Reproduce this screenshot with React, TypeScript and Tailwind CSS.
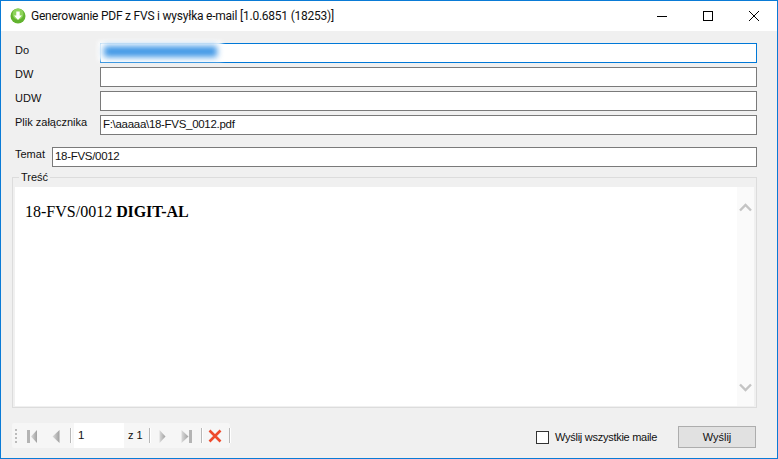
import type { ReactNode } from "react";

const font = { fontFamily: '"Liberation Sans", Arial, sans-serif' };

function Field({ label, value, focused, children }: { label: string; value?: string; focused?: boolean; children?: ReactNode }) {
  return (
    <div className="flex h-5 items-start">
      <span className="w-[88px] shrink-0 pl-[3px] text-[11px] leading-[14px] text-[#111]">{label}</span>
      <div className={`relative flex h-5 flex-1 items-center border bg-white px-[2px] text-[11.5px] tracking-[-0.3px] text-[#111] ${focused ? "border-[#0078d7]" : "border-[#7a7a7a]"}`}>
        {value}
        {children}
      </div>
    </div>
  );
}

// przyciski nawigace toolbaru, 16x16 ikona na stredu 23px tlacitka
function NavIcon({ kind }: { kind: "first" | "prev" | "next" | "last" }) {
  return (
    <div className="flex h-full w-[23px] shrink-0 items-center justify-center">
      <svg width="16" height="16" viewBox="0 0 16 16">
        <defs>
          <linearGradient id="tg" x1="0" y1="0" x2="1" y2="0">
            <stop offset="0" stopColor="#dadada" />
            <stop offset="1" stopColor="#a0a0a0" />
          </linearGradient>
        </defs>
        {kind === "first" && <><rect x="3" y="2" width="3" height="13" fill="#b4b4b4" /><polygon points="13,2 13,15 7,8.5" fill="url(#tg)" /></>}
        {kind === "prev" && <polygon points="11.5,2 11.5,15 4.5,8.5" fill="url(#tg)" />}
        {kind === "next" && <polygon points="4.5,2 4.5,15 10.5,8.5" fill="url(#tg)" />}
        {kind === "last" && <><polygon points="2.5,2 2.5,15 9.5,8.5" fill="url(#tg)" /><rect x="10" y="2" width="3" height="13" fill="#b4b4b4" /></>}
      </svg>
    </div>
  );
}

const Sep = ({ className }: { className: string }) => <div className={`h-[15px] w-[2px] shrink-0 border-l border-[#b8b8b8] bg-white ${className}`} />;

export default function App() {
  return (
    <div className="flex h-[459px] w-[778px] flex-col overflow-hidden border border-[#0a7bd6] bg-[#f0f0f0]" style={font}>
      <div className="flex h-[30px] shrink-0 items-center bg-white">
        <svg width="16" height="16" viewBox="0 0 16 16" className="ml-[9px] mr-[5px] shrink-0">
          <circle cx="8" cy="8" r="7.5" fill="#62b32f" />
          <circle cx="8" cy="6" r="5.5" fill="#8ed35a" />
          <path d="M6.3 3.5h3.4v4h2.3L8 12 4 7.5h2.3z" fill="#fff" />
        </svg>
        <span className="text-[12px] tracking-[-0.23px] text-[#111]" style={{ fontFamily: 'Roboto, sans-serif' }}>
          Generowanie PDF z FVS i wysyłka e-mail [1.0.6851 (18253)]
        </span>
        <div className="ml-auto flex items-center">
          <svg width="46" height="30" viewBox="0 0 46 30"><path d="M18 15.5h10" stroke="#000" /></svg>
          <svg width="46" height="30" viewBox="0 0 46 30"><rect x="18.5" y="10.5" width="9" height="9" fill="none" stroke="#000" /></svg>
          <svg width="46" height="30" viewBox="0 0 46 30"><path d="M18 10l10 10M28 10L18 20" stroke="#000" /></svg>
        </div>
      </div>

      <div className="flex flex-1 flex-col pl-[11px] pr-5">
        <div className="mt-3 flex flex-col gap-1">
          <Field label="Do" focused>
            <div className="absolute -left-[3px] -top-[3px] h-5 w-[124px] bg-white blur-[2px]" />
            <div className="absolute left-[3px] top-[2px] h-[11px] w-[113px] bg-[#3f97e6] blur-[3px]" />
          </Field>
          <Field label="DW" />
          <Field label="UDW" />
          <Field label="Plik załącznika" value="F:\aaaaa\18-FVS_0012.pdf" />
        </div>

        <div className="mt-3 flex h-5 items-start">
          <span className="w-10 shrink-0 pl-[3px] text-[11px] leading-[14px] text-[#111]">Temat</span>
          <div className="flex h-5 flex-1 items-center border border-[#7a7a7a] bg-white px-[2px] text-[11.5px] tracking-[-0.3px] text-[#111]">18-FVS/0012</div>
        </div>

        <div className="relative mt-[10px] flex h-[231px] flex-col border border-[#dcdcdc] pl-[2px] pr-[2px] pb-[1px] pt-[9px]">
          <span className="absolute -top-[7px] left-[6px] bg-[#f0f0f0] px-[2px] text-[11px] leading-[12px] text-[#111]">Treść</span>
          <div className="flex min-h-0 flex-1 bg-white">
            <div className="flex-1 pl-[10px] pt-[15px] text-[16px] leading-[20px] text-black" style={{ fontFamily: '"Liberation Serif", serif' }}>
              18-FVS/0012 <b className="tracking-[-0.1px]">DIGIT-AL</b>
            </div>
            <div className="flex w-[17px] flex-col items-center justify-between bg-[#fafafa] pb-[14px] pt-[16px]">
              <svg width="13" height="9" viewBox="0 0 13 9"><path d="M1 7.5l5.5-5.5L12 7.5" fill="none" stroke="#c4c4c4" strokeWidth="2.4" /></svg>
              <svg width="13" height="9" viewBox="0 0 13 9"><path d="M1 1.5L6.5 7 12 1.5" fill="none" stroke="#c4c4c4" strokeWidth="2.4" /></svg>
            </div>
          </div>
        </div>

        <div className="mt-[15px] flex items-start">
          <div className="flex h-[25px] w-[218px] shrink-0 items-center rounded-[2px] bg-[#f6f6f6] pl-[3px]">
            <div className="mr-[2px] flex h-[14px] w-[3px] shrink-0 flex-col justify-between">
              <i className="block h-[2px] w-[2px] bg-[#bbb]" /><i className="block h-[2px] w-[2px] bg-[#bbb]" /><i className="block h-[2px] w-[2px] bg-[#bbb]" /><i className="block h-[2px] w-[2px] bg-[#bbb]" />
            </div>
            <NavIcon kind="first" />
            <div className="w-px shrink-0" />
            <NavIcon kind="prev" />
            <Sep className="ml-[3px] mr-[2px]" />
            <div className="flex h-[25px] w-[50px] shrink-0 items-center bg-white pl-[4px] text-[11.5px] text-[#111]">1</div>
            <span className="w-[21px] shrink-0 pl-[4px] text-[11px] whitespace-nowrap text-[#111]">z 1</span>
            <Sep className="ml-[4px]" />
            <NavIcon kind="next" />
            <div className="w-px shrink-0" />
            <NavIcon kind="last" />
            <Sep className="ml-[3px]" />
            <div className="flex h-full w-[23px] shrink-0 items-center justify-center">
              <svg width="16" height="16" viewBox="0 0 16 16">
                <path d="M2.5 2.5l11 11M13.5 2.5l-11 11" stroke="#ee4a2c" strokeWidth="2.6" />
              </svg>
            </div>
            <Sep className="ml-[3px]" />
          </div>

          <label className="ml-[306px] mt-[6px] flex shrink-0 items-center">
            <span className="h-[13px] w-[13px] border border-[#333] bg-white" />
            <span className="ml-[6px] text-[11px] tracking-[-0.27px] text-[#111]">Wyślij wszystkie maile</span>
          </label>

          <button className="ml-auto mr-px mt-[3px] h-[22px] w-[78px] shrink-0 border border-[#adadad] bg-[#e1e1e1] text-[11px] text-[#111]">Wyślij</button>
        </div>
      </div>
    </div>
  );
}
